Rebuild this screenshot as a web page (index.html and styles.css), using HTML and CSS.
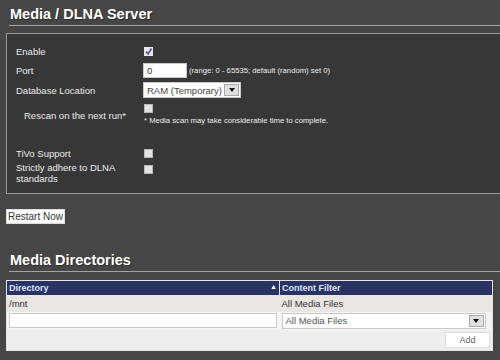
FILE: index.html
```html
<!DOCTYPE html>
<html lang="en">
<head>
  <meta charset="UTF-8">
  <meta name="viewport" content="width=device-width, initial-scale=1.0">
  <title>Media / DLNA Server</title>
  <link rel="stylesheet" href="styles.css">
</head>
<body>
  <h2 class="section-title">Media / DLNA Server</h2>
  <div class="panel">
    <div class="row">
      <div class="label">Enable</div>
      <div class="control"><span class="check checked"><svg viewBox="0 0 9 9" width="9" height="9"><path d="M2 4.5 L4 7 L7.5 1.5" fill="none" stroke="#5a4d96" stroke-width="1.6"/></svg></span></div>
    </div>
    <div class="row">
      <div class="label">Port</div>
      <div class="control">
        <span class="text-input port">0</span>
        <span class="hint">(range: 0 - 65535; default (random) set 0)</span>
      </div>
    </div>
    <div class="row">
      <div class="label">Database Location</div>
      <div class="control">
        <span class="select db"><span class="select-text">RAM (Temporary)</span><span class="arrow"></span></span>
      </div>
    </div>
    <div class="row rescan">
      <div class="label indent">Rescan on the next run*</div>
      <div class="control stack">
        <span class="check"></span>
        <span class="hint">* Media scan may take considerable time to complete.</span>
      </div>
    </div>
    <div class="row tivo">
      <div class="label">TiVo Support</div>
      <div class="control"><span class="check"></span></div>
    </div>
    <div class="row strict">
      <div class="label">Strictly adhere to DLNA standards</div>
      <div class="control top"><span class="check"></span></div>
    </div>
  </div>

  <button class="btn restart">Restart Now</button>

  <h2 class="section-title second">Media Directories</h2>
  <table class="dirs">
    <thead>
      <tr><th class="dir-col">Directory <span class="sort">&#9650;</span></th><th>Content Filter</th></tr>
    </thead>
    <tbody>
      <tr class="entry"><td>/mnt</td><td>All Media Files</td></tr>
      <tr class="new-entry">
        <td><span class="text-input wide"></span></td>
        <td><span class="select filter"><span class="select-text">All Media Files</span><span class="arrow"></span></span></td>
      </tr>
      <tr class="actions"><td colspan="2"><button class="btn add">Add</button></td></tr>
    </tbody>
  </table>
</body>
</html>
```

FILE: styles.css
```css
* {
  margin: 0px;
  padding: 0px;
  box-sizing: border-box;
}

body {
  width: 500px;
  height: 360px;
  overflow: hidden;
  background-color: #464646;
  font-family: "Liberation Sans", Arial, sans-serif;
  font-size: 9.5px;
  color: #ececec;
}

.section-title {
  margin: 6px 0px 0px 9px;
  padding: 0px 0px 3px 1px;
  font-size: 14.5px;
  line-height: 16px;
  font-weight: bold;
  color: #ffffff;
  text-shadow: 1px 1px 1px rgba(0,0,0,0.4);
  border-bottom: 1px solid #a3a3a3;
}

.section-title.second {
  margin-top: 28px;
}

.panel {
  margin: 7px -10px 0px 6px;
  padding: 8px 9px 7px 9px;
  background-color: #373737;
  border: 1px solid #9a9a9a;
}

.row {
  display: flex;
  align-items: center;
  height: 20px;
  line-height: 11px;
}

.row:first-child {
  height: 18px;
}

.row.rescan {
  height: 30px;
}

.row.tivo {
  margin-top: 15px;
  height: 16px;
}

.row.strict {
  height: 25px;
  align-items: flex-start;
  padding-top: 1px;
}

.label {
  width: 127px;
  flex-shrink: 0;
  padding-right: 8px;
}

.label.indent {
  padding-left: 8px;
}

.control {
  display: flex;
  align-items: center;
  gap: 2px;
}

.control.stack {
  flex-direction: column;
  align-items: flex-start;
  gap: 2px;
  padding-left: 1px;
}

.control.top {
  padding-top: 3px;
  padding-left: 1px;
}

.row:first-child .control,
.row.tivo .control {
  padding-left: 1px;
}

.check {
  display: block;
  width: 9px;
  height: 9px;
  background-color: #e2e2e6;
  border: 1px solid #b8b8be;
}

.check.checked {
  background-color: #e6e6ee;
  border: none;
}

.check svg {
  display: block;
}

.hint {
  font-size: 7.7px;
  color: #eeeeee;
}

.text-input {
  display: block;
  background-color: #ffffff;
  border: 1px solid #c8c8c8;
  color: #333333;
  line-height: 13px;
  padding-left: 3px;
}

.text-input.port {
  width: 44px;
  height: 15px;
}

.text-input.wide {
  width: 268px;
  height: 15px;
}

.select {
  display: flex;
  align-items: center;
  justify-content: space-between;
  background-color: #ffffff;
  border: 1px solid #c8c8c8;
  color: #444444;
  padding: 0px 1px 0px 3px;
}

.select.db {
  width: 98px;
  height: 16px;
}

.select.filter {
  width: 204px;
  height: 16px;
  color: #555555;
}

.arrow {
  display: flex;
  align-items: center;
  justify-content: center;
  width: 15px;
  height: 12px;
  background-color: #e0e0e0;
  border: 1px solid #a8a8a8;
}

.arrow::after {
  content: "";
  border-left: 3.5px solid transparent;
  border-right: 3.5px solid transparent;
  border-top: 4px solid #111111;
}

.btn {
  display: block;
  background-color: #ffffff;
  border: 1px solid #dddddd;
  font-family: "Liberation Sans", Arial, sans-serif;
  color: #333333;
}

.btn.restart {
  margin: 15px 0px 0px 6px;
  height: 15px;
  padding: 0px 1px;
  font-size: 10px;
  line-height: 13px;
}

.dirs {
  margin: 8px 0px 0px 6px;
  width: 487px;
  border-collapse: collapse;
  border: 1px solid #e4e4e4;
  background-color: #eeeeee;
  color: #333333;
}

.dirs th {
  height: 14px;
  padding: 0px 2px;
  text-align: left;
  font-size: 9px;
  background-color: #2a3364;
  color: #dfe6ff;
}

.dirs th.dir-col {
  width: 273px;
  border-right: 1px solid #e8e8f0;
}

.sort {
  float: right;
  font-size: 7px;
  color: #ffffff;
}

.dirs td {
  padding: 0px 2px;
}

.entry td {
  height: 17px;
  background-color: #e9e5e0;
}

.new-entry td {
  height: 18px;
  background-color: #f5f5f5;
}

.actions td {
  height: 21px;
  padding-top: 1px;
  background-color: #eeeeee;
}

.btn.add {
  margin-left: auto;
  margin-right: 0px;
  width: 45px;
  height: 16px;
  font-size: 9px;
  color: #666666;
}
```
